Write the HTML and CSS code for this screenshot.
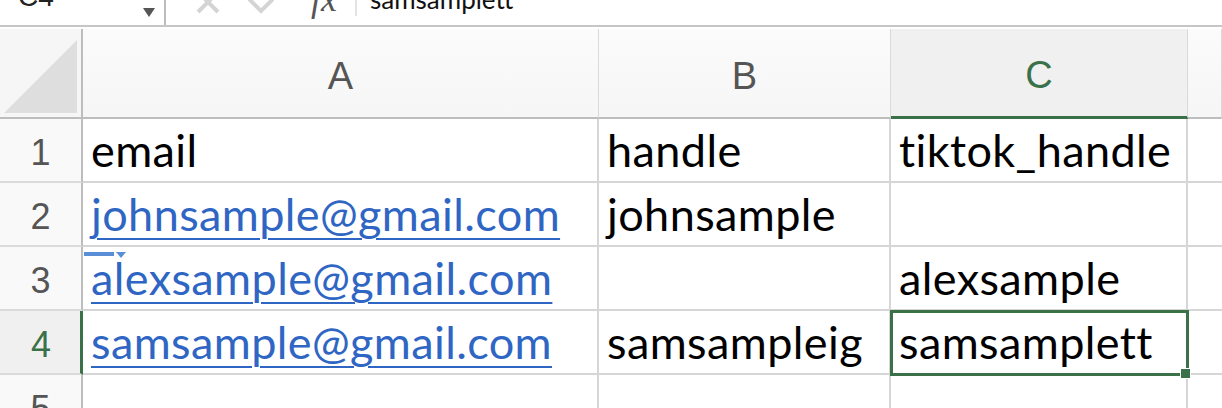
FILE: index.html
```html
<!DOCTYPE html>
<html lang="en">
  <head>
    <meta charset="UTF-8" />
    <title>Sheet</title>
    <link rel="stylesheet" href="styles.css">
  </head>
  <body>
    <!-- formula bar -->
    <div class="formula-bar">
      <div class="name-box">
        <span class="name">C4</span>
        <span class="drop"></span>
      </div>
      <div class="fb-tools">
        <svg class="fb-icon" width="24" height="14" viewBox="0 0 24 14">
          <path d="M2 -8 L22 12 M22 -8 L2 12" stroke="#d4d4d4" stroke-width="4" fill="none" />
        </svg>
        <svg class="fb-icon check" width="26" height="14" viewBox="0 0 26 14">
          <path d="M1 -1 L13 11 L25 -1" stroke="#d4d4d4" stroke-width="4" fill="none" />
        </svg>
        <span class="fx">fx</span>
      </div>
      <div class="fb-input">samsamplett</div>
    </div>

    <!-- sheet grid -->
    <div class="sheet">
      <div class="corner"><span class="tri"></span></div>
      <div class="col-head">A</div>
      <div class="col-head">B</div>
      <div class="col-head active">C</div>
      <div class="col-head last"></div>

      <div class="row-head">1</div>
      <div class="cell">email</div>
      <div class="cell">handle</div>
      <div class="cell">tiktok_handle</div>
      <div class="cell last"></div>

      <div class="row-head">2</div>
      <div class="cell"><a class="link">johnsample@gmail.com</a></div>
      <div class="cell">johnsample</div>
      <div class="cell"></div>
      <div class="cell last"></div>

      <div class="row-head">3</div>
      <div class="cell"><span class="smart-tag"></span><a class="link">alexsample@gmail.com</a></div>
      <div class="cell"></div>
      <div class="cell">alexsample</div>
      <div class="cell last"></div>

      <div class="row-head active">4</div>
      <div class="cell"><a class="link">samsample@gmail.com</a></div>
      <div class="cell">samsampleig</div>
      <div class="cell selected">samsamplett<span class="handle"></span></div>
      <div class="cell last"></div>

      <div class="row-head">5</div>
      <div class="cell"></div>
      <div class="cell"></div>
      <div class="cell"></div>
      <div class="cell last"></div>
    </div>
  </body>
</html>
```

FILE: styles.css
```css
* {
  margin: 0;
  padding: 0;
  box-sizing: border-box;
}
body {
  width: 1222px;
  height: 408px;
  overflow: hidden;
  background: #fff;
  font-family: Lato, "Liberation Sans", sans-serif;
}

/* formula bar, cut off at the top */
.formula-bar {
  height: 27px;
  display: flex;
  border-bottom: 2px solid #c6c6c6;
  overflow: hidden;
}
.name-box {
  width: 166px;
  display: flex;
  border-right: 2px solid #bdbdbd;
  position: relative;
}
.name {
  font-family: "Liberation Sans", sans-serif;
  font-size: 28px;
  line-height: 1;
  color: #222;
  margin: -17px 0 0 18px;
}
.drop {
  position: absolute;
  left: 143px;
  top: 8px;
  border-left: 6px solid transparent;
  border-right: 6px solid transparent;
  border-top: 9px solid #555;
}
.fb-tools {
  width: 191px;
  display: flex;
  align-items: flex-start;
  border-right: 2px solid #e4e4e4;
  height: 16px;
}
.fb-icon {
  margin-left: 30px;
  display: block;
}
.fb-icon.check {
  margin-left: 28px;
}
.fx {
  font-family: "Liberation Serif", serif;
  font-style: italic;
  font-size: 36px;
  line-height: 1;
  color: #555;
  margin: -19px 0 0 37px;
}
.fb-input {
  font-family: Lato, sans-serif;
  font-size: 26px;
  line-height: 1;
  color: #111;
  margin: -14px 0 0 13px;
}

/* grid */
.sheet {
  margin-top: 2px;
  display: grid;
  grid-template-columns: 83px 516px 292px 297px 1fr;
  grid-template-rows: 90px 64px 64px 64px 64px 64px;
}
.corner {
  background: #f6f6f6;
  border-right: 2px solid #bdbdbd;
  border-bottom: 2px solid #bdbdbd;
  position: relative;
}
.tri {
  position: absolute;
  left: 4px;
  top: 11px;
  width: 0;
  height: 0;
  border-left: 73px solid transparent;
  border-bottom: 73px solid #dedede;
}
.col-head {
  background: linear-gradient(#fbfbfb, #f6f6f6);
  border-right: 1px solid #dadada;
  border-bottom: 2px solid #bdbdbd;
  display: flex;
  align-items: flex-end;
  justify-content: center;
  padding-bottom: 19px;
  font-family: "Liberation Sans", sans-serif;
  font-size: 38px;
  color: #555;
}
.col-head.active {
  background: #f0f0f0;
  color: #3b7149;
  border-bottom: 3px solid #3b7149;
}
.row-head {
  background: #f9f9f9;
  border-right: 2px solid #bdbdbd;
  border-bottom: 2px solid #dadada;
  display: flex;
  align-items: flex-end;
  justify-content: center;
  padding-bottom: 7px;
  font-family: "Liberation Sans", sans-serif;
  font-size: 36px;
  color: #555;
}
.row-head.active {
  background: #f0f0f0;
  color: #3b7149;
  border-right: 3px solid #3b7149;
  padding-left: 2px;
}
.cell {
  border-right: 2px solid #d6d6d6;
  border-bottom: 2px solid #d6d6d6;
  display: flex;
  align-items: flex-end;
  padding: 0 0 8px 8px;
  font-size: 45px;
  letter-spacing: 0.4px;
  line-height: 1;
  color: #000;
  position: relative;
  white-space: nowrap;
}
.cell.last {
  border-right: none;
}
.link {
  color: #2f66c4;
  text-decoration: underline;
  text-decoration-thickness: 2px;
  text-underline-offset: 7px;
}
.smart-tag {
  position: absolute;
  left: 1px;
  top: 5px;
  width: 30px;
  height: 4px;
  background: #5a8fd8;
}
.smart-tag::after {
  content: "";
  position: absolute;
  left: 32px;
  top: 0;
  border-left: 5px solid transparent;
  border-right: 5px solid transparent;
  border-top: 6px solid #5a8fd8;
}
.selected {
  outline: 3px solid #3b7149;
  outline-offset: -2px;
  z-index: 2;
}
.handle {
  position: absolute;
  right: -5px;
  bottom: -6px;
  width: 11px;
  height: 11px;
  background: #3b7149;
  border: 1px solid #fff;
}
```
